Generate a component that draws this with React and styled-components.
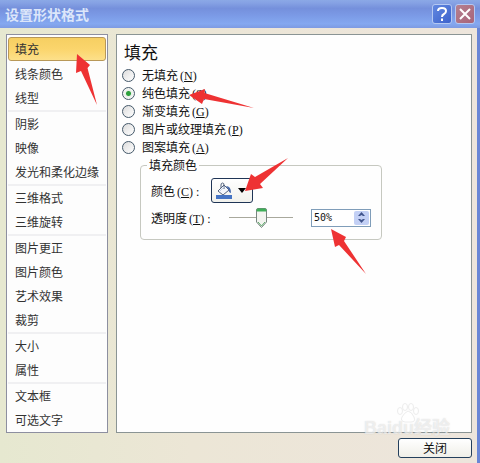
import React, { useState } from 'react'
import styled, { createGlobalStyle } from 'styled-components'

const GlobalStyle = createGlobalStyle`
  * {
    box-sizing: border-box;
  }
  body {
    margin: 0;
    background: #ece9d8;
  }
  body, button, input {
    font-family: "Noto Sans CJK SC", sans-serif;
    font-size: 12px;
    color: #111;
  }
`

const StyledWindow = styled.div`
  position: relative;
  display: flex;
  flex-direction: column;
  min-height: 100vh;
  background: linear-gradient(90deg, #e6e8d0, #ece6d6 40%, #ede5dc);
  border-right: 3px solid #6a86d6;
`

const StyledTitleBar = styled.header`
  display: flex;
  align-items: center;
  gap: 3px;
  height: 28px;
  margin-right: -3px;
  padding: 0 5px;
  background: linear-gradient(#8ba9e6, #86a2e4 10%, #7590dc 30%, #7b9ae6 55%, #84a8f0 85%, #7d9ae2);
`

const StyledTitle = styled.h1`
  flex: 1;
  margin: 0;
  font-size: 14px;
  line-height: 26px;
  font-weight: bold;
  color: #dce6fa;
`

const StyledTitleButton = styled.button`
  display: flex;
  align-items: center;
  justify-content: center;
  width: 20px;
  height: 20px;
  padding: 0;
  border: 1px solid #b4c8f2;
  border-radius: 3px;
  background: ${props => props.$close
    ? 'linear-gradient(135deg, #b58090, #a8647a)'
    : 'linear-gradient(135deg, #6288e0, #3c62cc)'};
`

const StyledBody = styled.div`
  display: grid;
  grid-template-columns: 102px 1fr;
  gap: 8px;
  padding: 6px 5px 0 6px;
`

const StyledNav = styled.nav`
  padding: 2px 1px 0;
  border: 1px solid #8d8fa0;
  background: #fdfdfd;
`

const StyledGroup = styled.div`
  display: flex;
  flex-direction: column;
  & + & {
    border-top: 2px solid #f0f0f2;
  }
`

const StyledNavItem = styled.button`
  height: 24px;
  padding: 0 6px;
  border: 1px solid ${props => props.$active ? '#b89858' : 'transparent'};
  border-radius: 3px;
  margin-bottom: ${props => props.$active ? '1px' : '0'};
  background: ${props => props.$active
    ? 'linear-gradient(#f6cf62, #fbd56c 50%, #fde08a)'
    : 'none'};
  color: #333;
  line-height: 20px;
  text-align: left;
  white-space: nowrap;
`

const StyledPanel = styled.main`
  padding: 5px;
  border: 1px solid #8a9494;
  background: #fefefe;
`

const StyledHeading = styled.h2`
  margin: 0;
  padding: 0 2px 2px;
  font-size: 17px;
  line-height: 24px;
  font-weight: normal;
`

const StyledRadioLabel = styled.label`
  display: flex;
  align-items: center;
  gap: 7px;
  height: 18px;
  line-height: 18px;
`

const StyledRadio = styled.input`
  appearance: none;
  width: 13px;
  height: 13px;
  margin: 0;
  border: 1px solid #45596a;
  border-radius: 50%;
  background: linear-gradient(135deg, #dcdcdc, #fff);
  &:checked {
    background: radial-gradient(circle, #2ca03c 0 2px, #e8efe8 3px, #fafafa 6px);
  }
`

const StyledHotkey = styled.span`
  margin-left: 2px;
  font-family: "Liberation Serif", serif;
  line-height: 12px;
`

const StyledFieldset = styled.fieldset`
  max-width: 242px;
  margin: 0 0 0 18px;
  padding: 3px 10px 8px;
  border: 1px solid #c6c8c0;
  border-radius: 4px;
`

const StyledLegend = styled.legend`
  padding: 0 2px;
  margin-left: -4px;
  line-height: 18px;
`

const StyledRow = styled.div`
  display: grid;
  grid-template-columns: 60px 1fr auto;
  align-items: center;
  height: 27px;
  white-space: nowrap;
`

const StyledColorButton = styled.button`
  display: flex;
  align-items: center;
  justify-content: space-between;
  width: 42px;
  height: 25px;
  padding: 0 6px 0 3px;
  border: 1px solid #1f3556;
  border-radius: 3px;
  background: linear-gradient(#fff, #f1f1ec);
`

const thumb = encodeURIComponent(`<svg xmlns="http://www.w3.org/2000/svg" width="11" height="20"><path d="M.5 2Q.5.5 2 .5H9Q10.500 .5 10.500 2V14L5.500 19.500L.5 14Z" fill="#f3f4f0" stroke="#77867f"/><path d="M1 3V2Q1 1 2 1H9Q10 1 10 2V3Z" fill="#3fae58" stroke="#3fae58"/><path d="M2 14L5.500 18L9 14" fill="none" stroke="#58a868"/></svg>`)

const StyledSlider = styled.input`
  appearance: none;
  width: 64px;
  height: 20px;
  margin: 0 0 0 18px;
  background: linear-gradient(#a8a89c, #a8a89c) center / 100% 1px no-repeat;
  &::-webkit-slider-thumb {
    appearance: none;
    width: 11px;
    height: 20px;
    background: url("data:image/svg+xml,${thumb}") no-repeat;
  }
`

const StyledSpinBox = styled.div`
  display: flex;
  align-items: center;
  width: 60px;
  height: 18px;
  padding: 1px;
  border: 1px solid #7f9db9;
  background: #fff;
`

const StyledSpinInput = styled.input`
  flex: 1;
  min-width: 0;
  padding: 0 0 0 1px;
  border: 0;
  background: none;
  font-family: "DejaVu Sans Mono", monospace;
  font-size: 10px;
  line-height: 14px;
`

const StyledSpinButtons = styled.div`
  display: flex;
  flex-direction: column;
  width: 15px;
  border-radius: 2px;
  background: #c3d0f5;
`

const StyledSpinButton = styled.button`
  display: flex;
  align-items: center;
  justify-content: center;
  height: 7px;
  padding: 0;
  border: 0;
  background: none;
`

const StyledFooter = styled.footer`
  display: flex;
  justify-content: flex-end;
  padding: 5px;
`

const StyledCloseButton = styled.button`
  width: 74px;
  height: 20px;
  padding: 0;
  border: 1px solid #243f5c;
  border-radius: 3px;
  background: linear-gradient(#fff, #f0efe8);
  line-height: 18px;
`

const StyledArrows = styled.svg`
  position: absolute;
  top: 0;
  left: 0;
  pointer-events: none;
`

const StyledWatermark = styled.div`
  position: absolute;
  right: 27px;
  bottom: 21px;
  font-family: "Liberation Sans", "Noto Sans CJK SC", sans-serif;
  font-size: 18px;
  line-height: 28px;
  font-weight: bold;
  color: rgba(255, 255, 255, .6);
  text-shadow: 0 0 1px rgba(170, 170, 170, .5);
  pointer-events: none;
  svg {
    position: absolute;
    left: 32px;
    bottom: 19px;
  }
`

const groups = [
  ['填充', '线条颜色', '线型'],
  ['阴影', '映像', '发光和柔化边缘'],
  ['三维格式', '三维旋转'],
  ['图片更正', '图片颜色', '艺术效果', '裁剪'],
  ['大小', '属性'],
  ['文本框', '可选文字'],
]

const fills = [
  { label: '无填充', hotkey: 'N' },
  { label: '纯色填充', hotkey: 'S' },
  { label: '渐变填充', hotkey: 'G' },
  { label: '图片或纹理填充', hotkey: 'P' },
  { label: '图案填充', hotkey: 'A' },
]

const Hotkey = ({ letter, colon }) => (
  <StyledHotkey>(<u>{letter}</u>){colon && ' :'}</StyledHotkey>
)

const BucketIcon = () => (
  <svg width="18" height="18" viewBox="0 0 18 18" aria-hidden="true">
    <path d="M3 9L9 3L14 8L8 13Z" fill="#f4f7fc" stroke="#52627e" />
    <path d="M6 6V3Q6 1 7.500 1T9 3V7" fill="none" stroke="#52627e" />
    <path d="M11 4Q16 4 16 11Q13 10 14 8Z" fill="#4668ac" />
    <path d="M5 9L9 5" stroke="#c3cfe4" />
    <rect x="1" y="13" width="16" height="4" fill="#4574c4" />
  </svg>
)

export default function App() {
  const [active, setActive] = useState('填充')
  const [fill, setFill] = useState('S')
  const [opacity, setOpacity] = useState(50)

  const step = (n) => setOpacity(Math.max(0, Math.min(100, opacity + n)))

  return (
    <StyledWindow>
      <GlobalStyle />
      <StyledTitleBar>
        <StyledTitle>设置形状格式</StyledTitle>
        <StyledTitleButton aria-label="帮助">
          <svg width="12" height="14" viewBox="0 0 12 14" fill="none" stroke="#fff" strokeWidth="2">
            <path d="M2 4Q2 1 6 1T10 4Q10 6 8 7T6 10" />
            <path d="M6 11.500V14" />
          </svg>
        </StyledTitleButton>
        <StyledTitleButton $close aria-label="关闭窗口">
          <svg width="12" height="12" viewBox="0 0 12 12" stroke="#fff" strokeWidth="2">
            <path d="M1 1L11 11M11 1L1 11" />
          </svg>
        </StyledTitleButton>
      </StyledTitleBar>

      <StyledBody>
        <StyledNav>
          {groups.map((group, i) => (
            <StyledGroup key={i}>
              {group.map(name => (
                <StyledNavItem key={name} $active={name === active} onClick={() => setActive(name)}>
                  {name}
                </StyledNavItem>
              ))}
            </StyledGroup>
          ))}
        </StyledNav>

        <StyledPanel>
          <StyledHeading>填充</StyledHeading>
          {fills.map(({ label, hotkey }) => (
            <StyledRadioLabel key={hotkey}>
              <StyledRadio
                type="radio"
                name="fill"
                checked={fill === hotkey}
                onChange={() => setFill(hotkey)}
              />
              <span>{label}<Hotkey letter={hotkey} /></span>
            </StyledRadioLabel>
          ))}

          <StyledFieldset>
            <StyledLegend>填充颜色</StyledLegend>
            <StyledRow>
              <label htmlFor="color">颜色<Hotkey letter="C" colon /></label>
              <StyledColorButton id="color">
                <BucketIcon />
                <svg width="8" height="5" viewBox="0 0 8 5" aria-hidden="true">
                  <path d="M0 0H8L4 5Z" fill="#000" />
                </svg>
              </StyledColorButton>
            </StyledRow>
            <StyledRow>
              <label htmlFor="opacity">透明度<Hotkey letter="T" colon /></label>
              <StyledSlider
                id="opacity"
                type="range"
                value={opacity}
                onChange={e => setOpacity(Number(e.target.value))}
              />
              <StyledSpinBox>
                <StyledSpinInput
                  aria-label="透明度"
                  value={`${opacity}%`}
                  onChange={e => setOpacity(Math.min(100, parseInt(e.target.value, 10) || 0))}
                />
                <StyledSpinButtons>
                  <StyledSpinButton aria-label="增加" onClick={() => step(1)}>
                    <svg width="7" height="4" viewBox="0 0 7 4"><path d="M0 4L3.500 0L7 4H5L3.500 3L2 4Z" fill="#40548c" /></svg>
                  </StyledSpinButton>
                  <StyledSpinButton aria-label="减少" onClick={() => step(-1)}>
                    <svg width="7" height="4" viewBox="0 0 7 4"><path d="M0 0L3.500 4L7 0H5L3.500 1L2 0Z" fill="#40548c" /></svg>
                  </StyledSpinButton>
                </StyledSpinButtons>
              </StyledSpinBox>
            </StyledRow>
          </StyledFieldset>
        </StyledPanel>
      </StyledBody>

      <StyledFooter>
        <StyledCloseButton>关闭</StyledCloseButton>
      </StyledFooter>

      <StyledWatermark>
        <svg width="24" height="20" viewBox="0 0 24 20" fill="#fff" stroke="#ececec" strokeWidth="1">
          <ellipse cx="4" cy="8" rx="2.500" ry="3.500" />
          <ellipse cx="9" cy="4" rx="2.500" ry="3.500" />
          <ellipse cx="15" cy="4" rx="2.500" ry="3.500" />
          <ellipse cx="20" cy="8" rx="2.500" ry="3.500" />
          <path d="M12 8Q8 10 6 14T9 19H15Q20 19 18 14T12 8Z" />
        </svg>
        Baidu经验
      </StyledWatermark>

      {/* red pointers over the controls */}
      <StyledArrows width="480" height="300" viewBox="0 0 480 300" fill="#ee3233" aria-hidden="true">
        <path d="M77 54L90 65L87.500 68L97 105L81 71L76 73Z" />
        <path d="M189 95L205 89L204.500 93L254 108L204 99L202 104Z" />
        <path d="M245 191L251 174L255 177L288 158L260 184L263 188Z" />
        <path d="M331 229L346 237L344 241L366 274L339 245L335 247Z" />
      </StyledArrows>
    </StyledWindow>
  )
}
